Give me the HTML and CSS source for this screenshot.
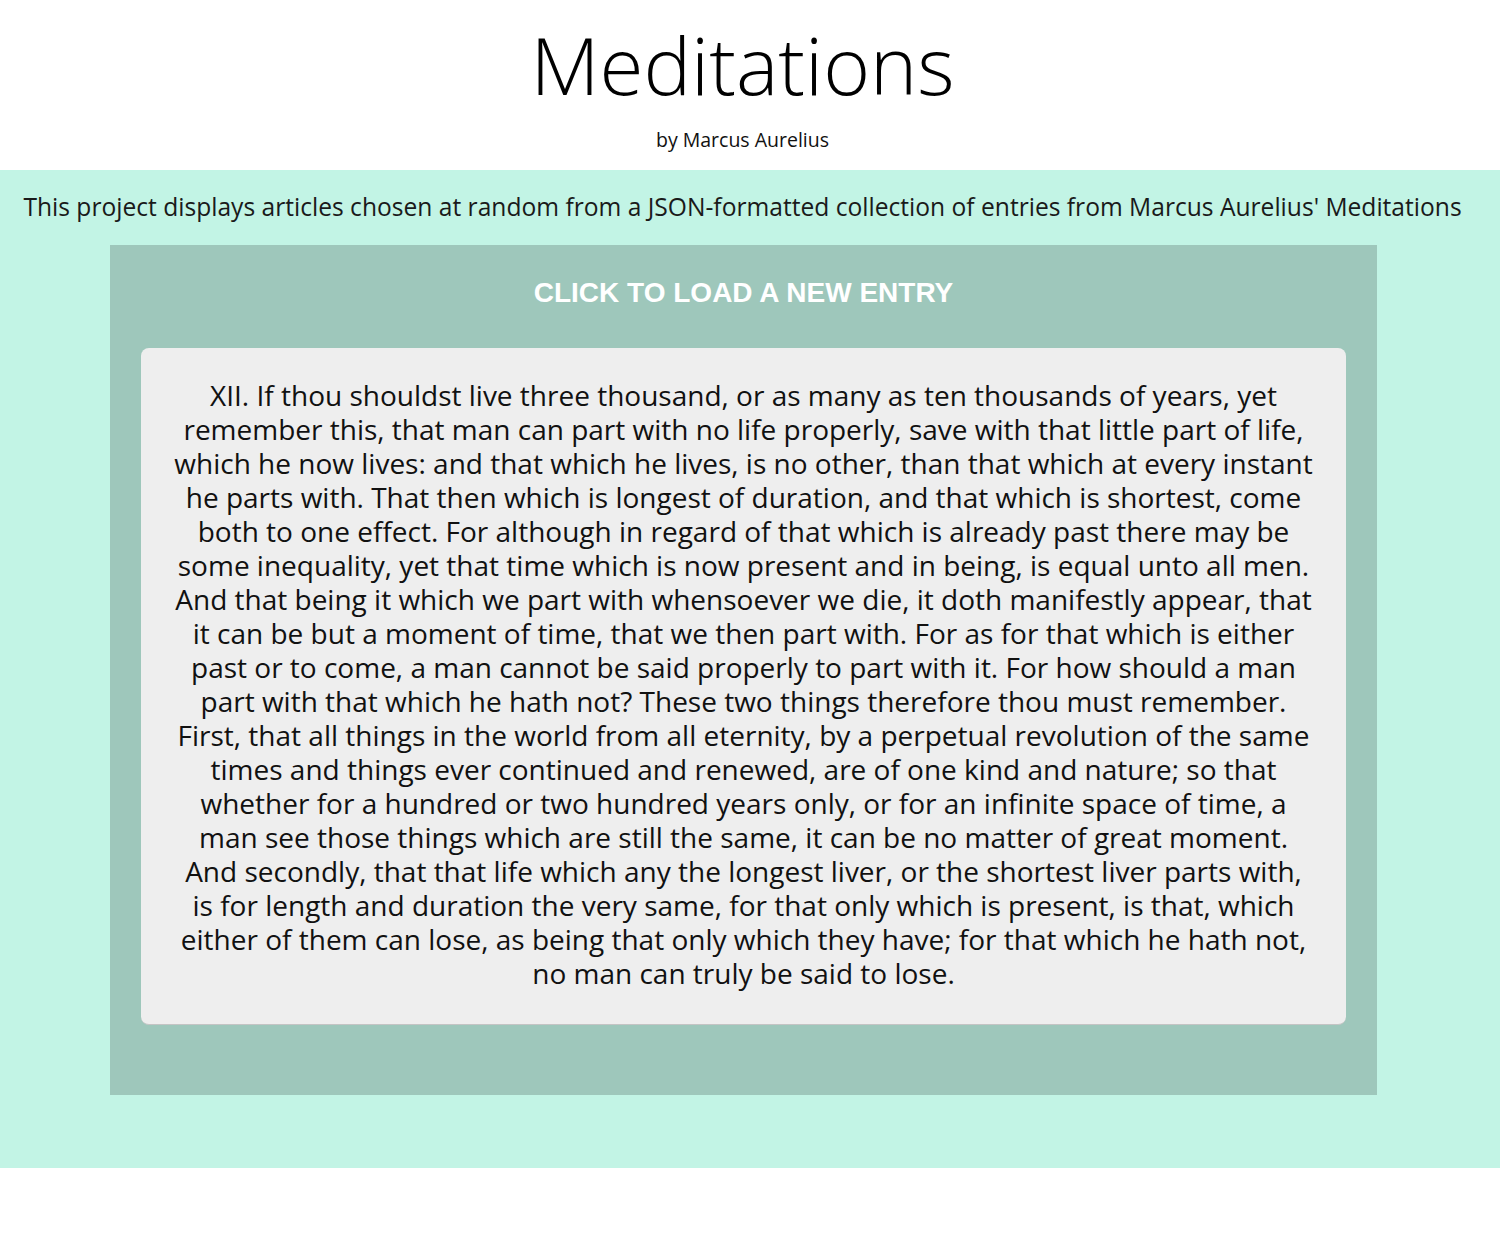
FILE: index.html
```html
<!DOCTYPE html>
<html lang="en">
<head>
<meta charset="utf-8">
<title>Meditations</title>
<link rel="stylesheet" href="styles.css">
</head>
<body>
<header class="header">
  <h1 class="title">Meditations</h1>
  <p class="author">by Marcus Aurelius</p>
</header>
<main class="main">
  <p class="intro">This project displays articles chosen at random from a JSON-formatted collection of entries from Marcus Aurelius' Meditations</p>
  <section class="panel">
    <button class="load-btn" type="button">CLICK TO LOAD A NEW ENTRY</button>
    <article class="entry">
      <p class="entry-text">XII. If thou shouldst live three thousand, or as many as ten thousands of years, yet remember this, that man can part with no life properly, save with that little part of life, which he now lives: and that which he lives, is no other, than that which at every instant he parts with. That then which is longest of duration, and that which is shortest, come both to one effect. For although in regard of that which is already past there may be some inequality, yet that time which is now present and in being, is equal unto all men. And that being it which we part with whensoever we die, it doth manifestly appear, that it can be but a moment of time, that we then part with. For as for that which is either past or to come, a man cannot be said properly to part with it. For how should a man part with that which he hath not? These two things therefore thou must remember. First, that all things in the world from all eternity, by a perpetual revolution of the same times and things ever continued and renewed, are of one kind and nature; so that whether for a hundred or two hundred years only, or for an infinite space of time, a man see those things which are still the same, it can be no matter of great moment. And secondly, that that life which any the longest liver, or the shortest liver parts with, is for length and duration the very same, for that only which is present, is that, which either of them can lose, as being that only which they have; for that which he hath not, no man can truly be said to lose.</p>
    </article>
  </section>
</main>
</body>
</html>
```

FILE: styles.css
```css
* { box-sizing: border-box; }
html, body { margin: 0; padding: 0; background: #ffffff; }
body { font-family: "Open Sans", "Lato", sans-serif; color: #111; }

.header {
  padding: 18px 15px 18px 0;
  text-align: center;
}
.title {
  margin: 0;
  font-size: 80px;
  line-height: 92px;
  font-weight: 300;
  color: #000;
}
.author {
  margin: 18px 0 0;
  font-size: 19.5px;
  line-height: 24px;
  color: #111;
}

.main {
  background: #c2f4e5;
  padding: 22px 15px 73px 0;
}
.intro {
  margin: 0 0 23px;
  text-align: center;
  font-size: 24.6px;
  line-height: 30px;
  color: #1a1a1a;
}
.panel {
  width: 1267px;
  margin-left: 110px;
  background: #9ec7bb;
  padding: 33px 31px 70px;
  display: flex;
  flex-direction: column;
  align-items: center;
  gap: 40px;
}
.load-btn {
  background: none;
  border: 0;
  padding: 0;
  cursor: pointer;
  font-family: "Liberation Sans", Arial, sans-serif;
  font-weight: 700;
  font-size: 28px;
  line-height: 30px;
  color: #ffffff;
}
.entry {
  align-self: stretch;
  background: #eeeeee;
  border-radius: 8px;
  border-bottom: 1px solid #c4c4c4;
  padding: 30px 32px 34px;
}
.entry-text {
  margin: 0;
  text-align: center;
  font-size: 28px;
  line-height: 34px;
  color: #111;
}
```
